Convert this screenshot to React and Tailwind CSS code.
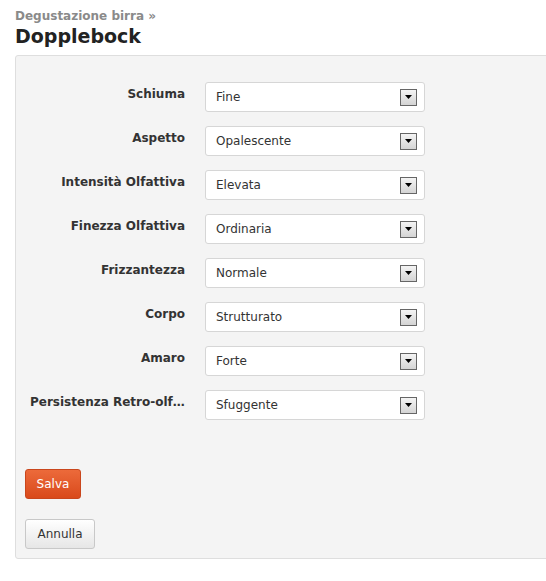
import React from "react";

const fields = [
  { label: "Schiuma", value: "Fine" },
  { label: "Aspetto", value: "Opalescente" },
  { label: "Intensità Olfattiva", value: "Elevata" },
  { label: "Finezza Olfattiva", value: "Ordinaria" },
  { label: "Frizzantezza", value: "Normale" },
  { label: "Corpo", value: "Strutturato" },
  { label: "Amaro", value: "Forte" },
  { label: "Persistenza Retro-olfattiva", value: "Sfuggente" },
];

const SelectBox = ({ value }) => (
  <div className="w-[220px] h-[30px] bg-white border border-[#d6d6d6] rounded-[3px] flex items-center justify-between pl-[10px] pr-[7px]">
    <span className="text-[12px] text-[#333]">{value}</span>
    <div className="w-[17px] h-[17px] border border-[#666] bg-gradient-to-b from-[#f4f4f4] to-[#d4d4d4] flex items-center justify-center">
      <svg width="7" height="4" viewBox="0 0 7 4">
        <path d="M0 0h7L3.5 4z" fill="#000" />
      </svg>
    </div>
  </div>
);

export default function App() {
  return (
    <div className="w-[546px] h-[581px] bg-white overflow-hidden font-['DejaVu_Sans',sans-serif]">
      <div className="pl-[15px] pt-[9px]">
        <div className="text-[12px] font-bold text-[#8a8a8a] leading-[14px]">Degustazione birra »</div>
        <h1 className="text-[19px] font-bold text-[#222] leading-[24px] mt-[1px]">Dopplebock</h1>
      </div>
      <div className="ml-[15px] mt-[7px] w-[560px] h-[504px] bg-[#f4f4f4] border border-[#dedede] rounded-[3px] pl-[9px] pt-[26px]">
        <div className="flex flex-col gap-[14px]">
          {fields.map((f) => (
            <div key={f.label} className="flex gap-[20px]">
              <div className="w-[160px] pl-[5px] pt-[3px] text-right text-[12px] font-bold text-[#333] truncate">
                {f.label}
              </div>
              <SelectBox value={f.value} />
            </div>
          ))}
        </div>
        <button className="mt-[49px] block w-[56px] h-[30px] rounded-[3px] border border-[#c9461c] bg-gradient-to-b from-[#ec6a3a] to-[#d9491a] text-white text-[12px]">
          Salva
        </button>
        <button className="mt-[20px] block w-[70px] h-[30px] rounded-[3px] border border-[#c8c8c8] bg-gradient-to-b from-white to-[#e6e6e6] text-[#333] text-[12px]">
          Annulla
        </button>
      </div>
    </div>
  );
}
